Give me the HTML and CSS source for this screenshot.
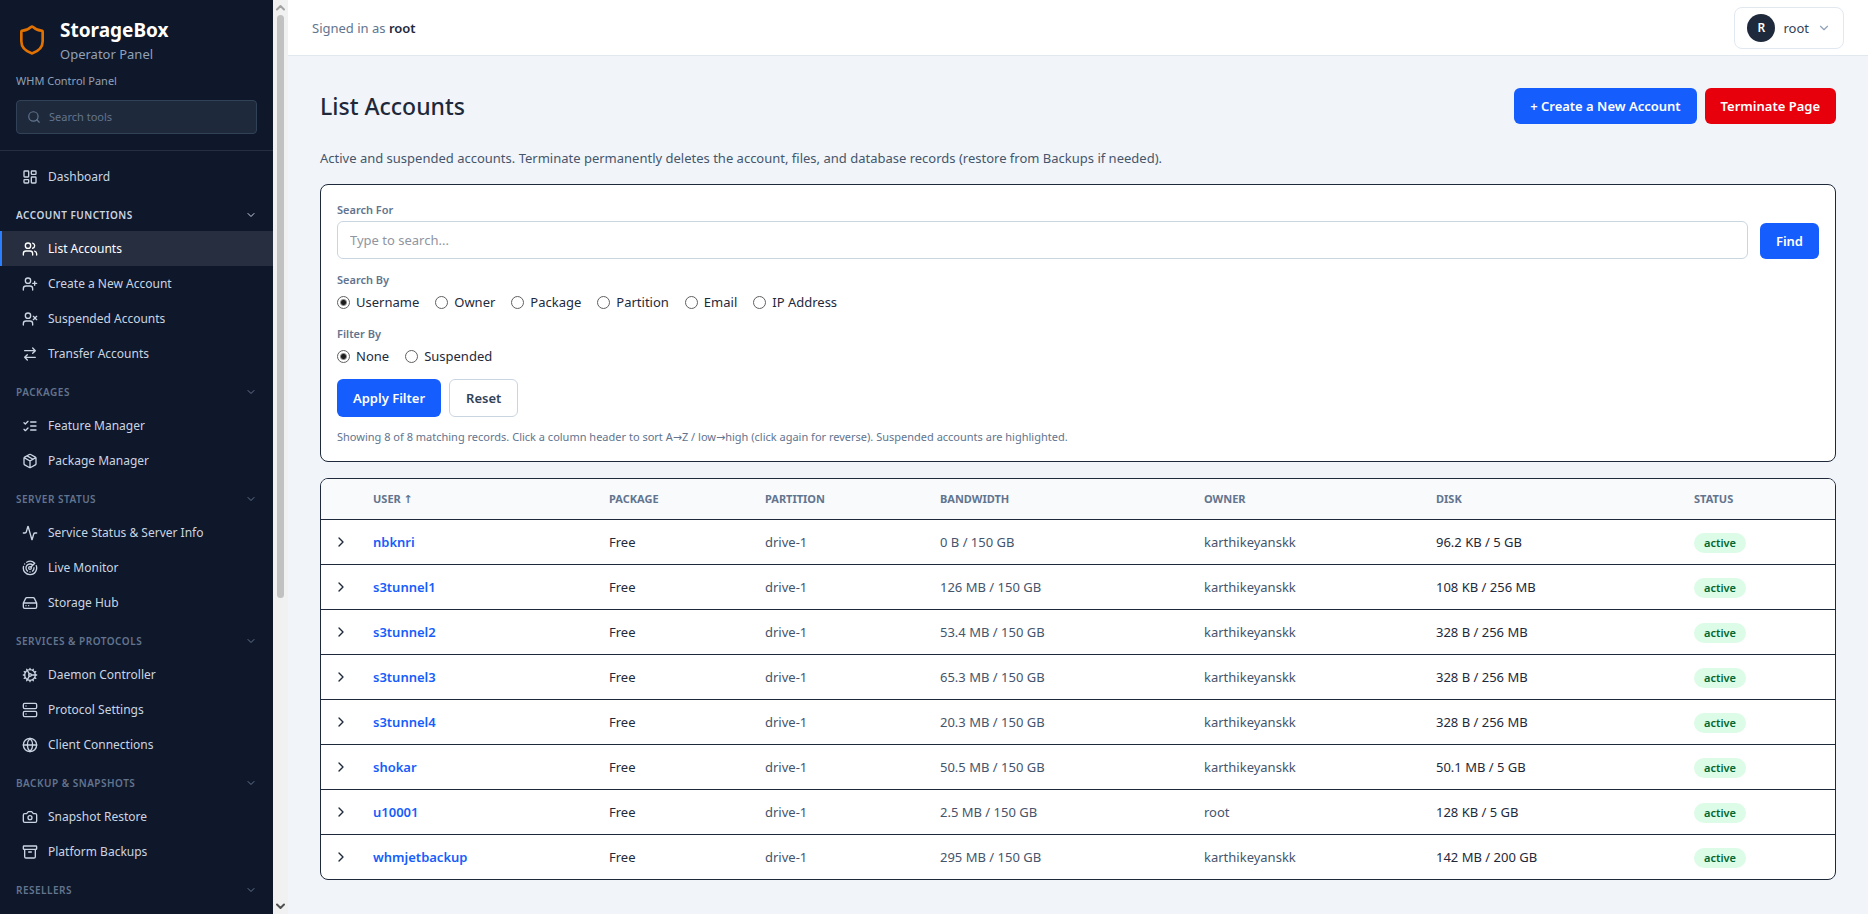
FILE: index.html
```html
<!DOCTYPE html>
<html lang="en">
<head>
    <meta charset="UTF-8">
    <meta name="viewport" content="width=device-width, initial-scale=1.0">
    <title>List Accounts - StorageBox</title>
    <link rel="stylesheet" href="styles.css">
</head>
<body>

    <aside class="sidebar">
        <div class="sidebar-head">
            <div class="brand">
                <svg class="brand-logo" viewBox="0 0 24 24"><path d="M20 13c0 5-3.500 7.500-7.660 8.950a1 1 0 0 1-.67-.01C7.500 20.500 4 18 4 13V6a1 1 0 0 1 1-1c2 0 4.500-1.200 6.240-2.720a1.170 1.170 0 0 1 1.520 0C14.510 3.810 17 5 19 5a1 1 0 0 1 1 1z"/></svg>
                <div>
                    <div class="brand-name">StorageBox</div>
                    <div class="brand-sub">Operator Panel</div>
                </div>
            </div>
            <div class="panel-name">WHM Control Panel</div>
            <label class="tool-search">
                <svg viewBox="0 0 24 24"><circle cx="11" cy="11" r="8"/><path d="m21 21-4.300-4.300"/></svg>
                <input type="search" placeholder="Search tools" aria-label="Search tools">
            </label>
        </div>

        <nav class="nav">
            <a class="nav-item" href="#"><svg viewBox="0 0 24 24"><rect x="3" y="3" width="7" height="9" rx="1"/><rect x="14" y="3" width="7" height="5" rx="1"/><rect x="14" y="12" width="7" height="9" rx="1"/><rect x="3" y="16" width="7" height="5" rx="1"/></svg>Dashboard</a>

            <button class="nav-group open">Account Functions<svg viewBox="0 0 24 24"><path d="m6 9 6 6 6-6"/></svg></button>
            <a class="nav-item active" href="#"><svg viewBox="0 0 24 24"><path d="M16 21v-2a4 4 0 0 0-4-4H6a4 4 0 0 0-4 4v2"/><circle cx="9" cy="7" r="4"/><path d="M22 21v-2a4 4 0 0 0-3-3.870M16 3.130a4 4 0 0 1 0 7.750"/></svg>List Accounts</a>
            <a class="nav-item" href="#"><svg viewBox="0 0 24 24"><path d="M16 21v-2a4 4 0 0 0-4-4H6a4 4 0 0 0-4 4v2"/><circle cx="9" cy="7" r="4"/><path d="M19 8v6M22 11h-6"/></svg>Create a New Account</a>
            <a class="nav-item" href="#"><svg viewBox="0 0 24 24"><path d="M16 21v-2a4 4 0 0 0-4-4H6a4 4 0 0 0-4 4v2"/><circle cx="9" cy="7" r="4"/><path d="m17 8 5 5M22 8l-5 5"/></svg>Suspended Accounts</a>
            <a class="nav-item" href="#"><svg viewBox="0 0 24 24"><path d="m16 3 4 4-4 4M20 7H4M8 21l-4-4 4-4M4 17h16"/></svg>Transfer Accounts</a>

            <button class="nav-group">Packages<svg viewBox="0 0 24 24"><path d="m6 9 6 6 6-6"/></svg></button>
            <a class="nav-item" href="#"><svg viewBox="0 0 24 24"><path d="m3 17 2 2 4-4M3 7l2 2 4-4M13 6h8M13 12h8M13 18h8"/></svg>Feature Manager</a>
            <a class="nav-item" href="#"><svg viewBox="0 0 24 24"><path d="M11 21.730a2 2 0 0 0 2 0l7-4A2 2 0 0 0 21 16V8a2 2 0 0 0-1-1.730l-7-4a2 2 0 0 0-2 0l-7 4A2 2 0 0 0 3 8v8a2 2 0 0 0 1 1.730zM12 22V12M3.290 7 12 12l8.710-5M7.500 4.270l9 5.150"/></svg>Package Manager</a>

            <button class="nav-group">Server Status<svg viewBox="0 0 24 24"><path d="m6 9 6 6 6-6"/></svg></button>
            <a class="nav-item" href="#"><svg viewBox="0 0 24 24"><path d="M22 12h-2.480a2 2 0 0 0-1.930 1.460l-2.350 8.360a.25.25 0 0 1-.48 0L9.240 2.180a.25.25 0 0 0-.48 0l-2.350 8.360A2 2 0 0 1 4.490 12H2"/></svg>Service Status &amp; Server Info</a>
            <a class="nav-item" href="#"><svg viewBox="0 0 24 24"><path d="M19.070 4.930A10 10 0 0 0 6.990 3.340M4 6h.01M2.290 9.620A10 10 0 1 0 21.310 8.350M16.240 7.760A6 6 0 1 0 8.230 16.670M12 18h.01M17.990 11.660A6 6 0 0 1 15.770 16.670M13.410 10.590l5.660-5.660"/><circle cx="12" cy="12" r="2"/></svg>Live Monitor</a>
            <a class="nav-item" href="#"><svg viewBox="0 0 24 24"><path d="M22 12H2M5.450 5.110 2 12v6a2 2 0 0 0 2 2h16a2 2 0 0 0 2-2v-6l-3.450-6.890A2 2 0 0 0 16.760 4H7.240a2 2 0 0 0-1.790 1.110zM6 16h.01M10 16h.01"/></svg>Storage Hub</a>

            <button class="nav-group">Services &amp; Protocols<svg viewBox="0 0 24 24"><path d="m6 9 6 6 6-6"/></svg></button>
            <a class="nav-item" href="#"><svg viewBox="0 0 24 24"><circle cx="12" cy="12" r="8"/><circle cx="12" cy="12" r="2"/><path d="M12 2v2M12 22v-2M17 20.660l-1-1.730M11 10.270 7 3.340M20.660 17l-1.730-1M3.340 7l1.730 1M14 12h8M2 12h2M20.660 7l-1.730 1M3.340 17l1.730-1M17 3.340l-1 1.730M11 13.730l-4 6.930"/></svg>Daemon Controller</a>
            <a class="nav-item" href="#"><svg viewBox="0 0 24 24"><rect x="2" y="2" width="20" height="8" rx="2"/><rect x="2" y="14" width="20" height="8" rx="2"/><path d="M6 6h.01M6 18h.01"/></svg>Protocol Settings</a>
            <a class="nav-item" href="#"><svg viewBox="0 0 24 24"><circle cx="12" cy="12" r="10"/><path d="M12 2a14.500 14.500 0 0 0 0 20 14.500 14.500 0 0 0 0-20M2 12h20"/></svg>Client Connections</a>

            <button class="nav-group">Backup &amp; Snapshots<svg viewBox="0 0 24 24"><path d="m6 9 6 6 6-6"/></svg></button>
            <a class="nav-item" href="#"><svg viewBox="0 0 24 24"><path d="M14.500 4h-5L7 7H4a2 2 0 0 0-2 2v9a2 2 0 0 0 2 2h16a2 2 0 0 0 2-2V9a2 2 0 0 0-2-2h-3z"/><circle cx="12" cy="13" r="3"/></svg>Snapshot Restore</a>
            <a class="nav-item" href="#"><svg viewBox="0 0 24 24"><rect x="2" y="3" width="20" height="5" rx="1"/><path d="M4 8v11a2 2 0 0 0 2 2h12a2 2 0 0 0 2-2V8M10 12h4"/></svg>Platform Backups</a>

            <button class="nav-group">Resellers<svg viewBox="0 0 24 24"><path d="m6 9 6 6 6-6"/></svg></button>
        </nav>
    </aside>

    <div class="scrollbar" aria-hidden="true">
        <svg class="arrow-up" viewBox="0 0 9 7"><path d="m1 5.500 3.500-3.500L8 5.500"/></svg>
        <div class="track"><div class="thumb"></div></div>
        <svg viewBox="0 0 9 7"><path d="m1 1.500 3.500 3.500L8 1.500"/></svg>
    </div>

    <div class="main">
        <header class="topbar">
            <div>Signed in as <strong>root</strong></div>
            <button class="user-menu">
                <span class="avatar">R</span>
                root
                <svg viewBox="0 0 24 24"><path d="m6 9 6 6 6-6"/></svg>
            </button>
        </header>

        <main class="content">
            <div class="page-head">
                <h1>List Accounts</h1>
                <div class="actions">
                    <button class="btn btn-primary">+ Create a New Account</button>
                    <button class="btn btn-danger">Terminate Page</button>
                </div>
            </div>
            <p class="intro">Active and suspended accounts. Terminate permanently deletes the account, files, and database records (restore from Backups if needed).</p>

            <form class="card filters" id="filterForm">
                <div class="search-row">
                    <div class="search-field">
                        <label class="label" for="search">Search For</label>
                        <input type="text" id="search" placeholder="Type to search...">
                    </div>
                    <button type="submit" class="btn btn-primary">Find</button>
                </div>

                <fieldset>
                    <legend class="label">Search By</legend>
                    <div class="radios">
                        <label><input type="radio" name="by" checked>Username</label>
                        <label><input type="radio" name="by">Owner</label>
                        <label><input type="radio" name="by">Package</label>
                        <label><input type="radio" name="by">Partition</label>
                        <label><input type="radio" name="by">Email</label>
                        <label><input type="radio" name="by">IP Address</label>
                    </div>
                </fieldset>

                <fieldset>
                    <legend class="label">Filter By</legend>
                    <div class="radios">
                        <label><input type="radio" name="filter" checked>None</label>
                        <label><input type="radio" name="filter">Suspended</label>
                    </div>
                </fieldset>

                <div class="form-buttons">
                    <button type="submit" class="btn btn-primary">Apply Filter</button>
                    <button type="reset" class="btn btn-outline">Reset</button>
                </div>
                <p class="hint">Showing 8 of 8 matching records. Click a column header to sort A→Z / low→high (click again for reverse). Suspended accounts are highlighted.</p>
            </form>

            <div class="card">
                <table class="accounts">
                    <colgroup>
                        <col class="col-toggle">
                        <col class="col-user">
                        <col class="col-package">
                        <col class="col-partition">
                        <col class="col-bandwidth">
                        <col class="col-owner">
                        <col class="col-disk">
                        <col class="col-status">
                    </colgroup>
                    <thead>
                        <tr>
                            <th></th>
                            <th>User ↑</th>
                            <th>Package</th>
                            <th>Partition</th>
                            <th>Bandwidth</th>
                            <th>Owner</th>
                            <th>Disk</th>
                            <th>Status</th>
                        </tr>
                    </thead>
                    <tbody id="rows"></tbody>
                </table>
            </div>
        </main>
    </div>

    <script>
        const accounts = [
            ['nbknri', '0 B / 150 GB', 'karthikeyanskk', '96.2 KB / 5 GB'],
            ['s3tunnel1', '126 MB / 150 GB', 'karthikeyanskk', '108 KB / 256 MB'],
            ['s3tunnel2', '53.4 MB / 150 GB', 'karthikeyanskk', '328 B / 256 MB'],
            ['s3tunnel3', '65.3 MB / 150 GB', 'karthikeyanskk', '328 B / 256 MB'],
            ['s3tunnel4', '20.3 MB / 150 GB', 'karthikeyanskk', '328 B / 256 MB'],
            ['shokar', '50.5 MB / 150 GB', 'karthikeyanskk', '50.1 MB / 5 GB'],
            ['u10001', '2.5 MB / 150 GB', 'root', '128 KB / 5 GB'],
            ['whmjetbackup', '295 MB / 150 GB', 'karthikeyanskk', '142 MB / 200 GB']
        ];

        document.getElementById('rows').innerHTML = accounts.map(([user, bandwidth, owner, disk]) => `
            <tr>
                <td class="toggle"><button aria-label="Expand ${user}"><svg viewBox="0 0 24 24"><path d="m9 18 6-6-6-6"/></svg></button></td>
                <td><a href="#">${user}</a></td>
                <td>Free</td>
                <td class="muted">drive-1</td>
                <td class="muted">${bandwidth}</td>
                <td class="muted">${owner}</td>
                <td>${disk}</td>
                <td><span class="badge">active</span></td>
            </tr>`).join('');

        document.getElementById('filterForm').onsubmit = function(e) {
            e.preventDefault();
        };
    </script>
</body>
</html>
```

FILE: styles.css
```css
* {
    box-sizing: border-box;
}

body {
    display: flex;
    height: 100vh;
    margin: 0;
    overflow: hidden;
    background: #f1f5f9;
    color: #1e293b;
    font-family: "Segoe UI", "Noto Sans", "DejaVu Sans", sans-serif;
    font-size: 13px;
    line-height: 20px;
}

button, input {
    font: inherit;
    color: inherit;
}

button {
    cursor: pointer;
}

a {
    text-decoration: none;
}

svg {
    flex-shrink: 0;
    fill: none;
    stroke: currentColor;
    stroke-width: 2;
    stroke-linecap: round;
    stroke-linejoin: round;
}

/* Sidebar */
.sidebar {
    flex: 0 0 273px;
    overflow: hidden;
    background: #0f172a;
    color: #cbd5e1;
}

.sidebar-head {
    padding: 16px;
    border-bottom: 1px solid #272e3f;
}

.brand {
    display: flex;
    align-items: center;
    gap: 12px;
}

.brand-logo {
    width: 32px;
    height: 32px;
    color: #e17100;
}

.brand-name {
    color: #fff;
    font-size: 19px;
    font-weight: 700;
    line-height: 29px;
}

.brand-sub {
    color: #90a1b9;
    line-height: 19px;
}

.panel-name {
    margin: 9px 0 11px;
    color: #90a1b9;
    font-size: 11px;
    line-height: 16px;
}

.tool-search {
    display: flex;
    align-items: center;
    gap: 8px;
    height: 34px;
    padding: 0 10px;
    border: 1px solid #314158;
    border-radius: 4px;
    background: #1e293b;
    color: #62748e;
}

.tool-search svg {
    width: 14px;
    height: 14px;
}

.tool-search input {
    flex: 1;
    min-width: 0;
    padding: 0;
    border: 0;
    outline: 0;
    background: none;
    color: #fff;
    font-size: 11px;
}

.tool-search input::placeholder {
    color: #62748e;
}

.nav {
    padding: 8px 0;
}

.nav-item {
    display: flex;
    align-items: center;
    gap: 10px;
    height: 35px;
    padding-left: 20px;
    border-left: 2px solid transparent;
    color: #cad5e2;
    font-size: 12px;
}

.nav-item svg {
    width: 16px;
    height: 16px;
}

.nav-item.active {
    border-left-color: #2b7fff;
    background: #272e3f;
    color: #fff;
}

.nav-group {
    display: flex;
    align-items: center;
    justify-content: space-between;
    width: 100%;
    height: 33px;
    margin-top: 4px;
    padding: 0 16px;
    border: 0;
    background: none;
    color: #62748e;
    font-size: 10px;
    font-weight: 600;
    letter-spacing: 0.5px;
    text-transform: uppercase;
}

.nav-group.open {
    color: #cad5e2;
}

.nav-group svg {
    width: 12px;
    height: 12px;
}

.scrollbar {
    display: flex;
    flex: 0 0 15px;
    flex-direction: column;
    align-items: center;
    padding: 4px 0;
    background: #f1f1f1;
    color: #505050;
}

.scrollbar svg {
    width: 9px;
    height: 7px;
}

.scrollbar .arrow-up {
    color: #a3a3a3;
}

.track {
    flex: 1;
    width: 7px;
    padding: 4px 0;
}

.thumb {
    height: 66%;
    border-radius: 4px;
    background: #c1c1c1;
}

/* Top bar */
.main {
    flex: 1;
    min-width: 0;
    overflow: hidden;
}

.topbar {
    display: flex;
    align-items: center;
    justify-content: space-between;
    height: 56px;
    padding: 0 24px;
    border-bottom: 1px solid #e2e8f0;
    background: #fff;
    color: #62748e;
}

.topbar strong {
    color: #1e293b;
    font-weight: 600;
}

.user-menu {
    display: flex;
    align-items: center;
    gap: 8px;
    height: 42px;
    padding: 0 12px;
    border: 1px solid #e2e8f0;
    border-radius: 8px;
    background: #fff;
    color: #314158;
}

.user-menu svg {
    width: 14px;
    height: 14px;
    color: #90a1b9;
}

.avatar {
    width: 28px;
    border-radius: 50%;
    background: #1e293b;
    color: #fff;
    font-size: 12px;
    font-weight: 600;
    line-height: 28px;
    text-align: center;
}

/* Page */
.content {
    padding: 32px;
}

.page-head {
    display: flex;
    align-items: center;
    justify-content: space-between;
}

h1 {
    margin: 0;
    font-size: 23px;
    font-weight: 500;
    line-height: 34px;
}

.actions, .form-buttons {
    display: flex;
    gap: 8px;
}

.btn {
    height: 36px;
    padding: 0 16px;
    border: 0;
    border-radius: 6px;
    color: #fff;
    font-weight: 600;
}

.btn-primary {
    background: #155dfc;
}

.btn-danger {
    background: #e7000b;
}

.btn-outline {
    border: 1px solid #cad5e2;
    background: #fff;
    color: #314158;
}

.intro {
    margin: 24px 0 16px;
    color: #45556c;
}

.card {
    overflow: hidden;
    border: 1px solid #1e293b;
    border-radius: 8px;
    background: #fff;
}

.filters {
    margin-bottom: 16px;
    padding: 16px;
}

.search-row {
    display: flex;
    align-items: flex-end;
    gap: 12px;
}

.search-field {
    flex: 1;
}

.label {
    display: block;
    padding: 0;
    margin-bottom: 3px;
    color: #62748e;
    font-size: 11px;
    font-weight: 600;
    line-height: 17px;
}

.search-field input {
    display: block;
    width: 100%;
    height: 38px;
    padding: 0 12px;
    border: 1px solid #cad5e2;
    border-radius: 6px;
    background: #fff;
}

.search-field input::placeholder {
    color: #90959f;
}

fieldset {
    margin: 12px 0 0;
    padding: 0;
    border: 0;
}

.radios {
    display: flex;
    gap: 16px;
    height: 22px;
}

.radios label {
    display: flex;
    align-items: center;
    gap: 6px;
}

.radios input {
    appearance: none;
    width: 13px;
    height: 13px;
    margin: 0;
    border: 1px solid #606060;
    border-radius: 50%;
}

.radios input:checked {
    background: radial-gradient(circle, #1c1c1c 2px, #fff 4px);
}

.form-buttons {
    margin-top: 12px;
}

.form-buttons .btn {
    height: 38px;
}

.hint {
    margin: 12px 0 0;
    color: #62748e;
    font-size: 11px;
    line-height: 16px;
}

/* Accounts table */
.accounts {
    width: 100%;
    border-collapse: separate;
    border-spacing: 0;
    table-layout: fixed;
}

.col-toggle { width: 36px; }
.col-user { width: 236px; }
.col-package { width: 156px; }
.col-partition { width: 175px; }
.col-bandwidth { width: 264px; }
.col-owner { width: 232px; }
.col-disk { width: 258px; }
.col-status { width: 157px; }

.accounts th {
    height: 41px;
    padding: 0 16px;
    border-bottom: 1px solid #1e293b;
    background: #f8fafc;
    color: #62748e;
    font-size: 11px;
    font-weight: 700;
    text-align: left;
    text-transform: uppercase;
}

.accounts td {
    height: 45px;
    padding: 0 16px;
    border-bottom: 1px solid #1e293b;
}

.accounts tbody tr:last-child td {
    height: 44px;
    border-bottom: 0;
}

.accounts .muted {
    color: #45556c;
}

.accounts a {
    color: #155dfc;
    font-weight: 600;
}

.accounts .toggle {
    padding: 0 12px;
}

.toggle button {
    display: block;
    padding: 0;
    border: 0;
    background: none;
}

.toggle svg {
    display: block;
    width: 16px;
    height: 16px;
}

.badge {
    display: inline-block;
    padding: 0 10px;
    border-radius: 10px;
    background: #dcfce7;
    color: #016630;
    font-size: 11px;
    font-weight: 600;
}
```
